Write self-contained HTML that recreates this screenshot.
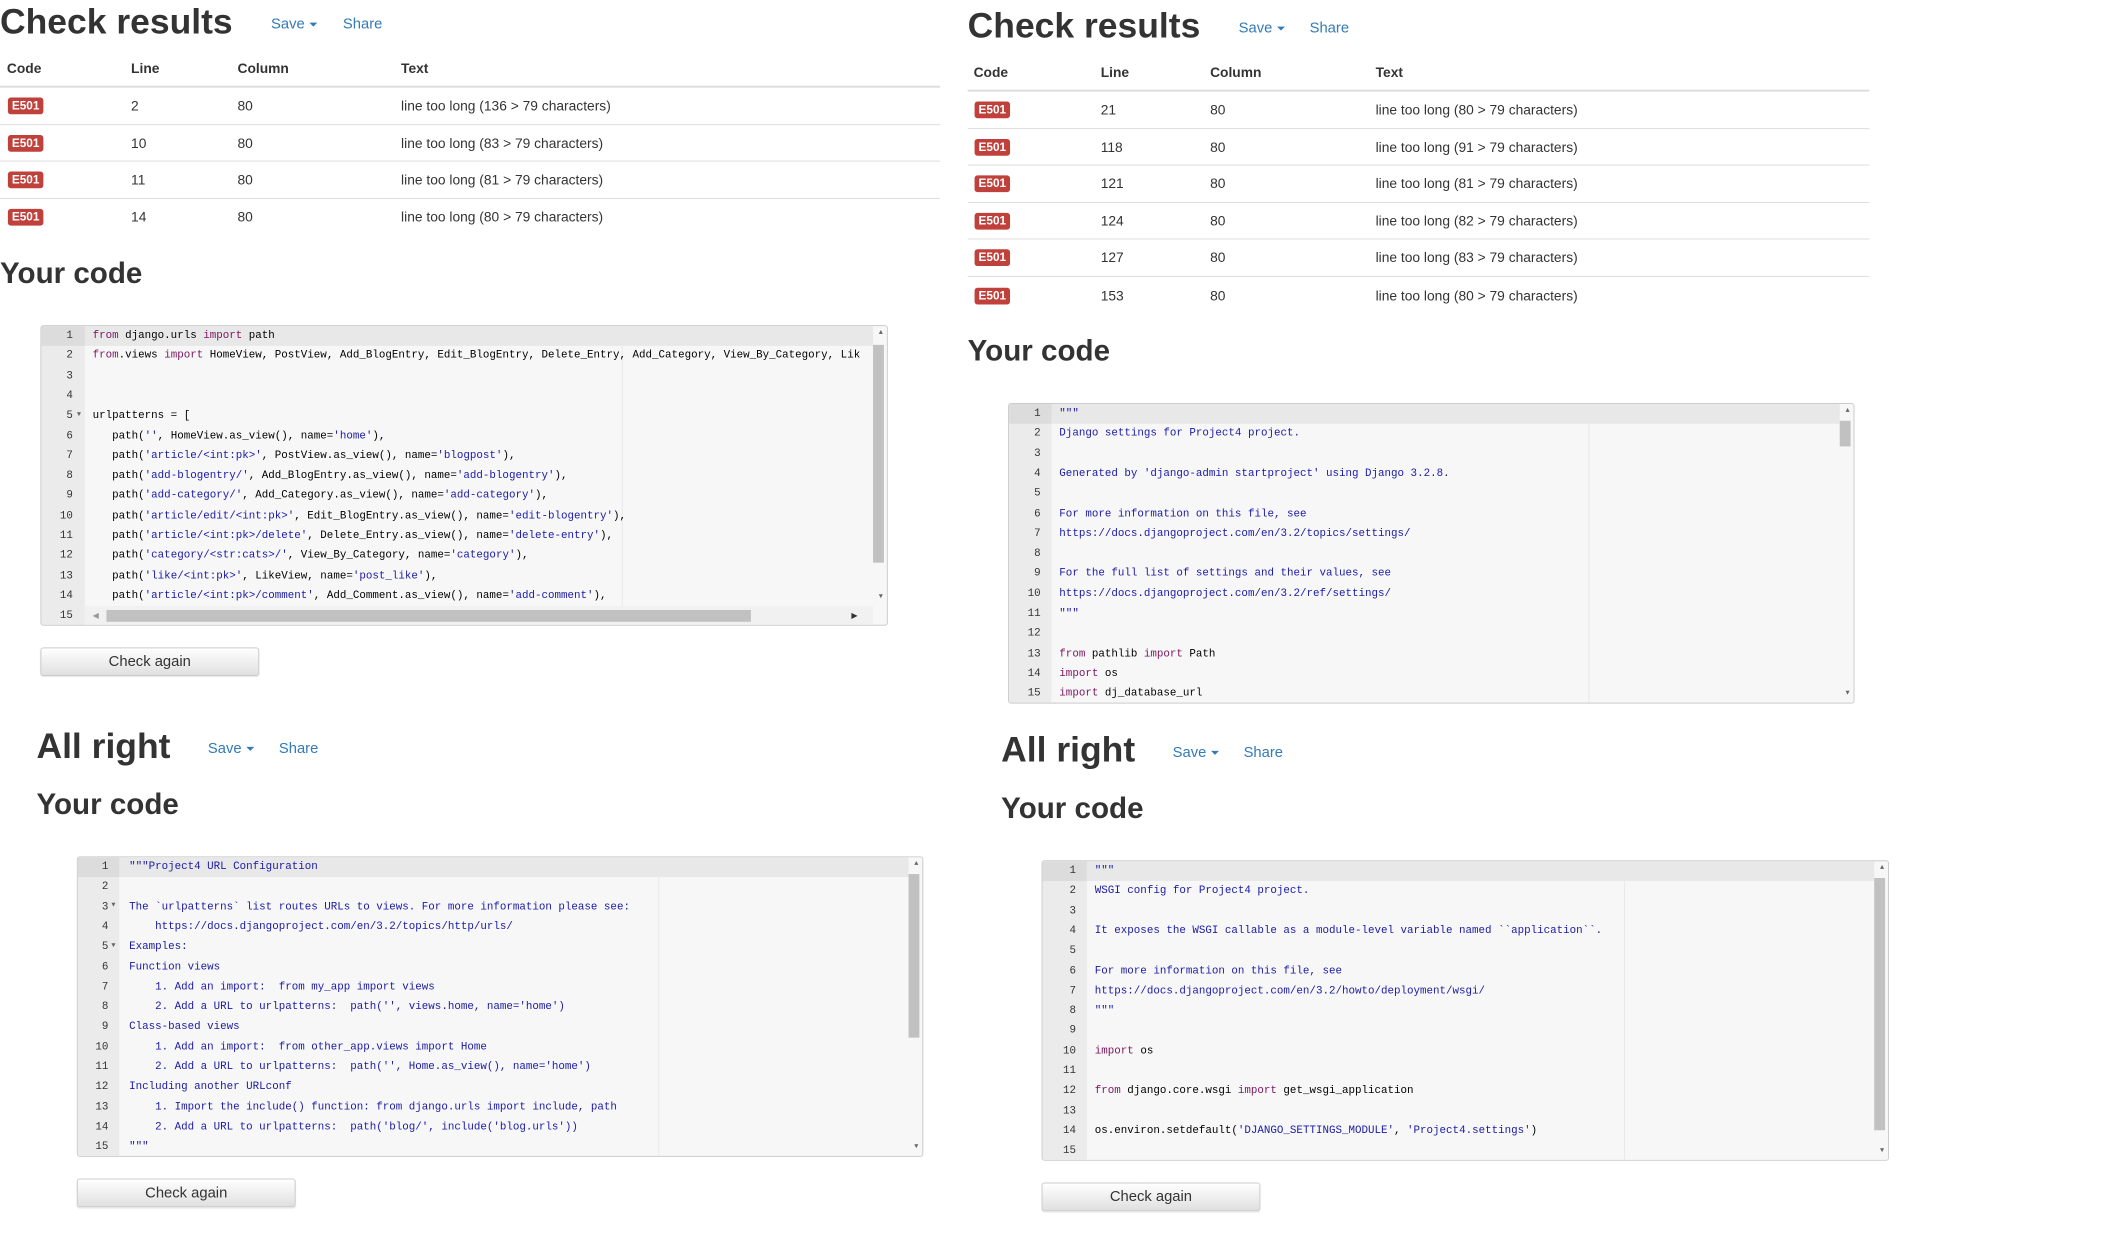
<!DOCTYPE html>
<html><head><meta charset="utf-8"><style>
*{margin:0;padding:0;box-sizing:border-box}
body{width:2115px;height:1252px;background:#fff;position:relative;overflow:hidden;font-family:"Liberation Sans",Arial,sans-serif;color:#333}
#w{position:absolute;left:0;top:0;width:2147px;height:1271px;transform:scale(0.9854);transform-origin:0 0}
.a{position:absolute;white-space:nowrap}
h1{position:absolute;font-size:36px;font-weight:bold;line-height:40px;white-space:nowrap}
h2{position:absolute;font-size:30px;font-weight:bold;line-height:34px;white-space:nowrap}
.lnk{position:absolute;font-size:15px;color:#337ab7;white-space:nowrap}
.caret{display:inline-block;border-top:4px solid #337ab7;border-left:4px solid transparent;border-right:4px solid transparent;vertical-align:middle;margin-left:5px}
.th{position:absolute;font-size:14px;font-weight:bold}
.td{position:absolute;font-size:14px}
.hr{position:absolute;height:1px;background:#ddd}
.hr2{position:absolute;height:2px;background:#ddd}
.b{position:absolute;background:#c0413b;color:#fff;font-size:12px;font-weight:bold;border-radius:3px;padding:1px 4px;line-height:15px}
.ed{position:absolute;background:#f7f7f7;border:1px solid #ccc;border-radius:3px;overflow:hidden;height:305px;width:860px;font-family:"Liberation Mono",monospace;font-size:11px;color:#000}
.g{position:absolute;left:0;top:0;bottom:0;background:#ebebeb}
.act{position:absolute;left:0;right:14px;top:0;height:20.3px;background:#e8e8e8}
.actg{position:absolute;left:0;top:0;height:20.3px;background:#dcdcdc}
.pm{position:absolute;top:0;bottom:0;width:1px;background:#e8e8e8}
.ln{position:absolute;height:20.3px;line-height:20.3px;text-align:right;color:#333}
.cl{position:absolute;height:20.3px;line-height:20.3px;white-space:pre}
.k{color:#7a1660}.s{color:#1a1aa6}
.vs{position:absolute;right:3px;width:11px;background:#c1c1c1}
.arr{position:absolute;right:4px;font-size:7px;color:#666}
.btn{position:absolute;width:222px;height:29px;border:1px solid #ccc;border-radius:3px;background:linear-gradient(#fff,#e0e0e0);font-size:15px;text-align:center;line-height:27px;color:#333;box-shadow:0 1px 1px rgba(0,0,0,.1)}
</style></head><body><div id="w">

<!-- LEFT TOP -->
<h1 style="left:0;top:2px">Check results</h1>
<div class="lnk" style="left:275px;top:16px">Save<span class="caret"></span></div>
<div class="lnk" style="left:348px;top:16px">Share</div>
<div class="th" style="left:7px;top:61px">Code</div>
<div class="th" style="left:133px;top:61px">Line</div>
<div class="th" style="left:241px;top:61px">Column</div>
<div class="th" style="left:407px;top:61px">Text</div>
<div class="hr2" style="left:0;top:87px;width:954px"></div>
<div class="b" style="left:8px;top:99px">E501</div><div class="td" style="left:133px;top:99px">2</div><div class="td" style="left:241px;top:99px">80</div><div class="td" style="left:407px;top:99px">line too long (136 &gt; 79 characters)</div>
<div class="hr" style="left:0;top:126px;width:954px"></div>
<div class="b" style="left:8px;top:137px">E501</div><div class="td" style="left:133px;top:137px">10</div><div class="td" style="left:241px;top:137px">80</div><div class="td" style="left:407px;top:137px">line too long (83 &gt; 79 characters)</div>
<div class="hr" style="left:0;top:163px;width:954px"></div>
<div class="b" style="left:8px;top:174px">E501</div><div class="td" style="left:133px;top:174px">11</div><div class="td" style="left:241px;top:174px">80</div><div class="td" style="left:407px;top:174px">line too long (81 &gt; 79 characters)</div>
<div class="hr" style="left:0;top:201px;width:954px"></div>
<div class="b" style="left:8px;top:212px">E501</div><div class="td" style="left:133px;top:212px">14</div><div class="td" style="left:241px;top:212px">80</div><div class="td" style="left:407px;top:212px">line too long (80 &gt; 79 characters)</div>
<h2 style="left:0;top:261px">Your code</h2>

<div class="ed" style="left:41px;top:330px">
<div class="g" style="width:44px"></div><div class="act"></div><div class="actg" style="width:44px"></div><div class="pm" style="left:589px"></div>
<div class="ln" style="left:0;width:32px;top:0">1</div><div class="ln" style="left:0;width:32px;top:20.3px">2</div><div class="ln" style="left:0;width:32px;top:40.6px">3</div><div class="ln" style="left:0;width:32px;top:60.9px">4</div><div class="ln" style="left:0;width:32px;top:81.2px">5</div><div class="ln" style="left:0;width:32px;top:101.5px">6</div><div class="ln" style="left:0;width:32px;top:121.8px">7</div><div class="ln" style="left:0;width:32px;top:142.1px">8</div><div class="ln" style="left:0;width:32px;top:162.4px">9</div><div class="ln" style="left:0;width:32px;top:182.7px">10</div><div class="ln" style="left:0;width:32px;top:203px">11</div><div class="ln" style="left:0;width:32px;top:223.3px">12</div><div class="ln" style="left:0;width:32px;top:243.6px">13</div><div class="ln" style="left:0;width:32px;top:263.9px">14</div><div class="ln" style="left:0;width:32px;top:284.2px">15</div>
<div class="a" style="left:36px;top:86px;font-size:7px;color:#666">▼</div>
<div class="cl" style="left:52px;top:0"><span class="k">from</span> django.urls <span class="k">import</span> path</div>
<div class="cl" style="left:52px;top:20.3px"><span class="k">from</span>.views <span class="k">import</span> HomeView, PostView, Add_BlogEntry, Edit_BlogEntry, Delete_Entry, Add_Category, View_By_Category, Lik</div>
<div class="cl" style="left:52px;top:81.2px">urlpatterns = [</div>
<div class="cl" style="left:52px;top:101.5px">   path(<span class="s">''</span>, HomeView.as_view(), name=<span class="s">'home'</span>),</div>
<div class="cl" style="left:52px;top:121.8px">   path(<span class="s">'article/&lt;int:pk&gt;'</span>, PostView.as_view(), name=<span class="s">'blogpost'</span>),</div>
<div class="cl" style="left:52px;top:142.1px">   path(<span class="s">'add-blogentry/'</span>, Add_BlogEntry.as_view(), name=<span class="s">'add-blogentry'</span>),</div>
<div class="cl" style="left:52px;top:162.4px">   path(<span class="s">'add-category/'</span>, Add_Category.as_view(), name=<span class="s">'add-category'</span>),</div>
<div class="cl" style="left:52px;top:182.7px">   path(<span class="s">'article/edit/&lt;int:pk&gt;'</span>, Edit_BlogEntry.as_view(), name=<span class="s">'edit-blogentry'</span>),</div>
<div class="cl" style="left:52px;top:203px">   path(<span class="s">'article/&lt;int:pk&gt;/delete'</span>, Delete_Entry.as_view(), name=<span class="s">'delete-entry'</span>),</div>
<div class="cl" style="left:52px;top:223.3px">   path(<span class="s">'category/&lt;str:cats&gt;/'</span>, View_By_Category, name=<span class="s">'category'</span>),</div>
<div class="cl" style="left:52px;top:243.6px">   path(<span class="s">'like/&lt;int:pk&gt;'</span>, LikeView, name=<span class="s">'post_like'</span>),</div>
<div class="cl" style="left:52px;top:263.9px">   path(<span class="s">'article/&lt;int:pk&gt;/comment'</span>, Add_Comment.as_view(), name=<span class="s">'add-comment'</span>),</div>
<div class="a" style="left:44px;right:14px;top:284px;height:20px;background:#f1f1f1"></div>
<div class="a" style="left:66px;width:654px;top:288px;height:12px;background:#c1c1c1"></div>
<div class="a" style="left:52px;top:289px;font-size:8px;color:#999">◀</div><div class="a" style="left:822px;top:289px;font-size:8px;color:#333">▶</div>
<div class="vs" style="top:19px;height:221px"></div>
<div class="arr" style="top:3px">▲</div><div class="arr" style="top:271px">▼</div>
</div>
<div class="btn" style="left:41px;top:657px">Check again</div>

<!-- LEFT BOTTOM -->
<h1 style="left:37px;top:737px">All right</h1>
<div class="lnk" style="left:211px;top:751px">Save<span class="caret"></span></div>
<div class="lnk" style="left:283px;top:751px">Share</div>
<h2 style="left:37px;top:800px">Your code</h2>
<div class="ed" style="left:78px;top:869px;width:859px">
<div class="g" style="width:42px"></div><div class="act"></div><div class="actg" style="width:42px"></div><div class="pm" style="left:589px"></div>
<div class="ln" style="left:0;width:31px;top:0">1</div><div class="ln" style="left:0;width:31px;top:20.3px">2</div><div class="ln" style="left:0;width:31px;top:40.6px">3</div><div class="ln" style="left:0;width:31px;top:60.9px">4</div><div class="ln" style="left:0;width:31px;top:81.2px">5</div><div class="ln" style="left:0;width:31px;top:101.5px">6</div><div class="ln" style="left:0;width:31px;top:121.8px">7</div><div class="ln" style="left:0;width:31px;top:142.1px">8</div><div class="ln" style="left:0;width:31px;top:162.4px">9</div><div class="ln" style="left:0;width:31px;top:182.7px">10</div><div class="ln" style="left:0;width:31px;top:203px">11</div><div class="ln" style="left:0;width:31px;top:223.3px">12</div><div class="ln" style="left:0;width:31px;top:243.6px">13</div><div class="ln" style="left:0;width:31px;top:263.9px">14</div><div class="ln" style="left:0;width:31px;top:284.2px">15</div>
<div class="a" style="left:34px;top:45px;font-size:7px;color:#666">▼</div><div class="a" style="left:34px;top:86px;font-size:7px;color:#666">▼</div>
<div class="s">
<div class="cl" style="left:52px;top:0">"""Project4 URL Configuration</div>
<div class="cl" style="left:52px;top:40.6px">The `urlpatterns` list routes URLs to views. For more information please see:</div>
<div class="cl" style="left:52px;top:60.9px">    https://docs.djangoproject.com/en/3.2/topics/http/urls/</div>
<div class="cl" style="left:52px;top:81.2px">Examples:</div>
<div class="cl" style="left:52px;top:101.5px">Function views</div>
<div class="cl" style="left:52px;top:121.8px">    1. Add an import:  from my_app import views</div>
<div class="cl" style="left:52px;top:142.1px">    2. Add a URL to urlpatterns:  path('', views.home, name='home')</div>
<div class="cl" style="left:52px;top:162.4px">Class-based views</div>
<div class="cl" style="left:52px;top:182.7px">    1. Add an import:  from other_app.views import Home</div>
<div class="cl" style="left:52px;top:203px">    2. Add a URL to urlpatterns:  path('', Home.as_view(), name='home')</div>
<div class="cl" style="left:52px;top:223.3px">Including another URLconf</div>
<div class="cl" style="left:52px;top:243.6px">    1. Import the include() function: from django.urls import include, path</div>
<div class="cl" style="left:52px;top:263.9px">    2. Add a URL to urlpatterns:  path('blog/', include('blog.urls'))</div>
<div class="cl" style="left:52px;top:284.2px">"""</div>
</div>
<div class="vs" style="top:17px;height:166px"></div>
<div class="arr" style="top:3px">▲</div><div class="arr" style="top:290px">▼</div>
</div>
<div class="btn" style="left:78px;top:1196px">Check again</div>

<!-- RIGHT TOP -->
<h1 style="left:982px;top:6px">Check results</h1>
<div class="lnk" style="left:1257px;top:20px">Save<span class="caret"></span></div>
<div class="lnk" style="left:1329px;top:20px">Share</div>
<div class="th" style="left:988px;top:65px">Code</div>
<div class="th" style="left:1117px;top:65px">Line</div>
<div class="th" style="left:1228px;top:65px">Column</div>
<div class="th" style="left:1396px;top:65px">Text</div>
<div class="hr2" style="left:982px;top:91px;width:915px"></div>
<div class="b" style="left:989px;top:103px">E501</div><div class="td" style="left:1117px;top:103px">21</div><div class="td" style="left:1228px;top:103px">80</div><div class="td" style="left:1396px;top:103px">line too long (80 &gt; 79 characters)</div>
<div class="hr" style="left:982px;top:130px;width:915px"></div>
<div class="b" style="left:989px;top:141px">E501</div><div class="td" style="left:1117px;top:141px">118</div><div class="td" style="left:1228px;top:141px">80</div><div class="td" style="left:1396px;top:141px">line too long (91 &gt; 79 characters)</div>
<div class="hr" style="left:982px;top:167px;width:915px"></div>
<div class="b" style="left:989px;top:178px">E501</div><div class="td" style="left:1117px;top:178px">121</div><div class="td" style="left:1228px;top:178px">80</div><div class="td" style="left:1396px;top:178px">line too long (81 &gt; 79 characters)</div>
<div class="hr" style="left:982px;top:205px;width:915px"></div>
<div class="b" style="left:989px;top:216px">E501</div><div class="td" style="left:1117px;top:216px">124</div><div class="td" style="left:1228px;top:216px">80</div><div class="td" style="left:1396px;top:216px">line too long (82 &gt; 79 characters)</div>
<div class="hr" style="left:982px;top:242px;width:915px"></div>
<div class="b" style="left:989px;top:253px">E501</div><div class="td" style="left:1117px;top:253px">127</div><div class="td" style="left:1228px;top:253px">80</div><div class="td" style="left:1396px;top:253px">line too long (83 &gt; 79 characters)</div>
<div class="hr" style="left:982px;top:280px;width:915px"></div>
<div class="b" style="left:989px;top:292px">E501</div><div class="td" style="left:1117px;top:292px">153</div><div class="td" style="left:1228px;top:292px">80</div><div class="td" style="left:1396px;top:292px">line too long (80 &gt; 79 characters)</div>
<h2 style="left:982px;top:340px">Your code</h2>

<div class="ed" style="left:1023px;top:409px;width:859px">
<div class="g" style="width:43px"></div><div class="act"></div><div class="actg" style="width:43px"></div><div class="pm" style="left:588px"></div>
<div class="ln" style="left:0;width:32px;top:0">1</div><div class="ln" style="left:0;width:32px;top:20.3px">2</div><div class="ln" style="left:0;width:32px;top:40.6px">3</div><div class="ln" style="left:0;width:32px;top:60.9px">4</div><div class="ln" style="left:0;width:32px;top:81.2px">5</div><div class="ln" style="left:0;width:32px;top:101.5px">6</div><div class="ln" style="left:0;width:32px;top:121.8px">7</div><div class="ln" style="left:0;width:32px;top:142.1px">8</div><div class="ln" style="left:0;width:32px;top:162.4px">9</div><div class="ln" style="left:0;width:32px;top:182.7px">10</div><div class="ln" style="left:0;width:32px;top:203px">11</div><div class="ln" style="left:0;width:32px;top:223.3px">12</div><div class="ln" style="left:0;width:32px;top:243.6px">13</div><div class="ln" style="left:0;width:32px;top:263.9px">14</div><div class="ln" style="left:0;width:32px;top:284.2px">15</div>
<div class="s">
<div class="cl" style="left:51px;top:0">"""</div>
<div class="cl" style="left:51px;top:20.3px">Django settings for Project4 project.</div>
<div class="cl" style="left:51px;top:60.9px">Generated by 'django-admin startproject' using Django 3.2.8.</div>
<div class="cl" style="left:51px;top:101.5px">For more information on this file, see</div>
<div class="cl" style="left:51px;top:121.8px">https://docs.djangoproject.com/en/3.2/topics/settings/</div>
<div class="cl" style="left:51px;top:162.4px">For the full list of settings and their values, see</div>
<div class="cl" style="left:51px;top:182.7px">https://docs.djangoproject.com/en/3.2/ref/settings/</div>
<div class="cl" style="left:51px;top:203px">"""</div>
</div>
<div class="cl" style="left:51px;top:243.6px"><span class="k">from</span> pathlib <span class="k">import</span> Path</div>
<div class="cl" style="left:51px;top:263.9px"><span class="k">import</span> os</div>
<div class="cl" style="left:51px;top:284.2px"><span class="k">import</span> dj_database_url</div>
<div class="vs" style="top:17px;height:26px"></div>
<div class="arr" style="top:3px">▲</div><div class="arr" style="top:290px">▼</div>
</div>

<!-- RIGHT BOTTOM -->
<h1 style="left:1016px;top:741px">All right</h1>
<div class="lnk" style="left:1190px;top:755px">Save<span class="caret"></span></div>
<div class="lnk" style="left:1262px;top:755px">Share</div>
<h2 style="left:1016px;top:804px">Your code</h2>
<div class="ed" style="left:1057px;top:873px;width:860px">
<div class="g" style="width:45px"></div><div class="act"></div><div class="actg" style="width:45px"></div><div class="pm" style="left:590px"></div>
<div class="ln" style="left:0;width:34px;top:0">1</div><div class="ln" style="left:0;width:34px;top:20.3px">2</div><div class="ln" style="left:0;width:34px;top:40.6px">3</div><div class="ln" style="left:0;width:34px;top:60.9px">4</div><div class="ln" style="left:0;width:34px;top:81.2px">5</div><div class="ln" style="left:0;width:34px;top:101.5px">6</div><div class="ln" style="left:0;width:34px;top:121.8px">7</div><div class="ln" style="left:0;width:34px;top:142.1px">8</div><div class="ln" style="left:0;width:34px;top:162.4px">9</div><div class="ln" style="left:0;width:34px;top:182.7px">10</div><div class="ln" style="left:0;width:34px;top:203px">11</div><div class="ln" style="left:0;width:34px;top:223.3px">12</div><div class="ln" style="left:0;width:34px;top:243.6px">13</div><div class="ln" style="left:0;width:34px;top:263.9px">14</div><div class="ln" style="left:0;width:34px;top:284.2px">15</div>
<div class="s">
<div class="cl" style="left:53px;top:0">"""</div>
<div class="cl" style="left:53px;top:20.3px">WSGI config for Project4 project.</div>
<div class="cl" style="left:53px;top:60.9px">It exposes the WSGI callable as a module-level variable named ``application``.</div>
<div class="cl" style="left:53px;top:101.5px">For more information on this file, see</div>
<div class="cl" style="left:53px;top:121.8px">https://docs.djangoproject.com/en/3.2/howto/deployment/wsgi/</div>
<div class="cl" style="left:53px;top:142.1px">"""</div>
</div>
<div class="cl" style="left:53px;top:182.7px"><span class="k">import</span> os</div>
<div class="cl" style="left:53px;top:223.3px"><span class="k">from</span> django.core.wsgi <span class="k">import</span> get_wsgi_application</div>
<div class="cl" style="left:53px;top:263.9px">os.environ.setdefault(<span class="s">'DJANGO_SETTINGS_MODULE'</span>, <span class="s">'Project4.settings'</span>)</div>
<div class="vs" style="top:17px;height:256px"></div>
<div class="arr" style="top:3px">▲</div><div class="arr" style="top:290px">▼</div>
</div>
<div class="btn" style="left:1057px;top:1200px">Check again</div>

</div></body></html>
